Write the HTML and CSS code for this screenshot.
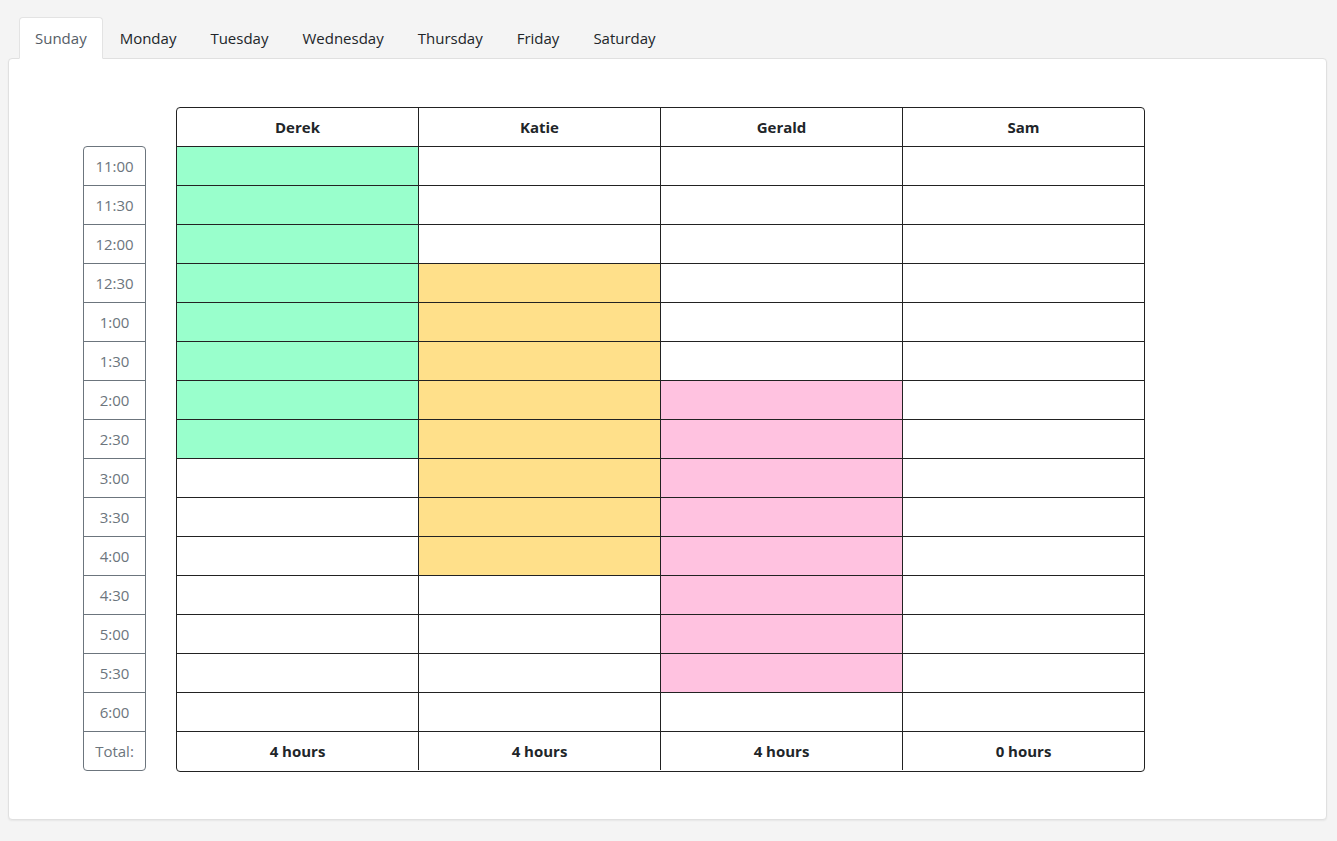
FILE: index.html
```html
<!DOCTYPE html>
<html>
<head>
<meta charset="utf-8">
<link rel="stylesheet" href="styles.css">
</head>
<body>
<div class="tabs">
  <div class="tab active">Sunday</div>
  <div class="tab">Monday</div>
  <div class="tab">Tuesday</div>
  <div class="tab">Wednesday</div>
  <div class="tab">Thursday</div>
  <div class="tab">Friday</div>
  <div class="tab">Saturday</div>
</div>
<div class="card">
  <div class="times">
    <div class="time">11:00</div>
    <div class="time">11:30</div>
    <div class="time">12:00</div>
    <div class="time">12:30</div>
    <div class="time">1:00</div>
    <div class="time">1:30</div>
    <div class="time">2:00</div>
    <div class="time">2:30</div>
    <div class="time">3:00</div>
    <div class="time">3:30</div>
    <div class="time">4:00</div>
    <div class="time">4:30</div>
    <div class="time">5:00</div>
    <div class="time">5:30</div>
    <div class="time">6:00</div>
    <div class="time">Total:</div>
  </div>
  <div class="grid">
    <div class="cell head">Derek</div><div class="cell head">Katie</div><div class="cell head">Gerald</div><div class="cell head">Sam</div>
    <div class="cell green"></div><div class="cell"></div><div class="cell"></div><div class="cell"></div>
    <div class="cell green"></div><div class="cell"></div><div class="cell"></div><div class="cell"></div>
    <div class="cell green"></div><div class="cell"></div><div class="cell"></div><div class="cell"></div>
    <div class="cell green"></div><div class="cell yellow"></div><div class="cell"></div><div class="cell"></div>
    <div class="cell green"></div><div class="cell yellow"></div><div class="cell"></div><div class="cell"></div>
    <div class="cell green"></div><div class="cell yellow"></div><div class="cell"></div><div class="cell"></div>
    <div class="cell green"></div><div class="cell yellow"></div><div class="cell pink"></div><div class="cell"></div>
    <div class="cell green"></div><div class="cell yellow"></div><div class="cell pink"></div><div class="cell"></div>
    <div class="cell"></div><div class="cell yellow"></div><div class="cell pink"></div><div class="cell"></div>
    <div class="cell"></div><div class="cell yellow"></div><div class="cell pink"></div><div class="cell"></div>
    <div class="cell"></div><div class="cell yellow"></div><div class="cell pink"></div><div class="cell"></div>
    <div class="cell"></div><div class="cell"></div><div class="cell pink"></div><div class="cell"></div>
    <div class="cell"></div><div class="cell"></div><div class="cell pink"></div><div class="cell"></div>
    <div class="cell"></div><div class="cell"></div><div class="cell pink"></div><div class="cell"></div>
    <div class="cell"></div><div class="cell"></div><div class="cell"></div><div class="cell"></div>
    <div class="cell total">4 hours</div><div class="cell total">4 hours</div><div class="cell total">4 hours</div><div class="cell total">0 hours</div>
  </div>
</div>
</body>
</html>
```
FILE: styles.css
```css
* { box-sizing: border-box; }
html, body { margin: 0; padding: 0; }
body {
  background: #f4f4f4;
  font-family: "Open Sans", "Noto Sans", sans-serif;
  font-size: 15px;
  color: #212529;
  padding: 17px 10px 22px 8px;
}
.tabs {
  display: flex;
  padding-left: 11px;
  position: relative;
  z-index: 1;
  margin-bottom: -1px;
}
.tab {
  height: 42px;
  padding: 0 16px;
  display: flex;
  align-items: center;
  border: 1px solid transparent;
  border-radius: 4px 4px 0 0;
  color: #212529;
}
.tab.active {
  background: #fff;
  border-color: #e3e3e3 #e3e3e3 #fff;
  color: #555d66;
  padding: 0 15px;
}
.card {
  background: #fff;
  border: 1px solid #e0e0e0;
  border-radius: 4px;
  box-shadow: 0 1px 2px rgba(0,0,0,0.06);
  height: 762px;
  display: flex;
  align-items: flex-start;
  padding: 48px 0 0 74px;
  gap: 30px;
}
.times {
  margin-top: 39px;
  width: 63px;
  border: 1px solid #6c757d;
  border-radius: 4px;
  overflow: hidden;
}
.time {
  height: 39px;
  border-bottom: 1px solid #6c757d;
  display: flex;
  align-items: center;
  justify-content: center;
  color: #6c757d;
}
.time:last-child { height: 38px; border-bottom: none; }
.grid {
  display: grid;
  grid-template-columns: 242px 242px 242px 241px;
  grid-auto-rows: 39px;
  width: 969px;
  border: 1px solid #222;
  border-radius: 4px;
  overflow: hidden;
}
.cell {
  border-right: 1px solid #222;
  border-bottom: 1px solid #222;
  display: flex;
  align-items: center;
  justify-content: center;
  font-weight: 700;
}
.cell:nth-child(4n) { border-right: none; }
.cell.total { border-bottom: none; height: 38px; }
.green { background: #99ffcc; }
.yellow { background: #ffe08a; }
.pink { background: #ffc2e0; }
```
